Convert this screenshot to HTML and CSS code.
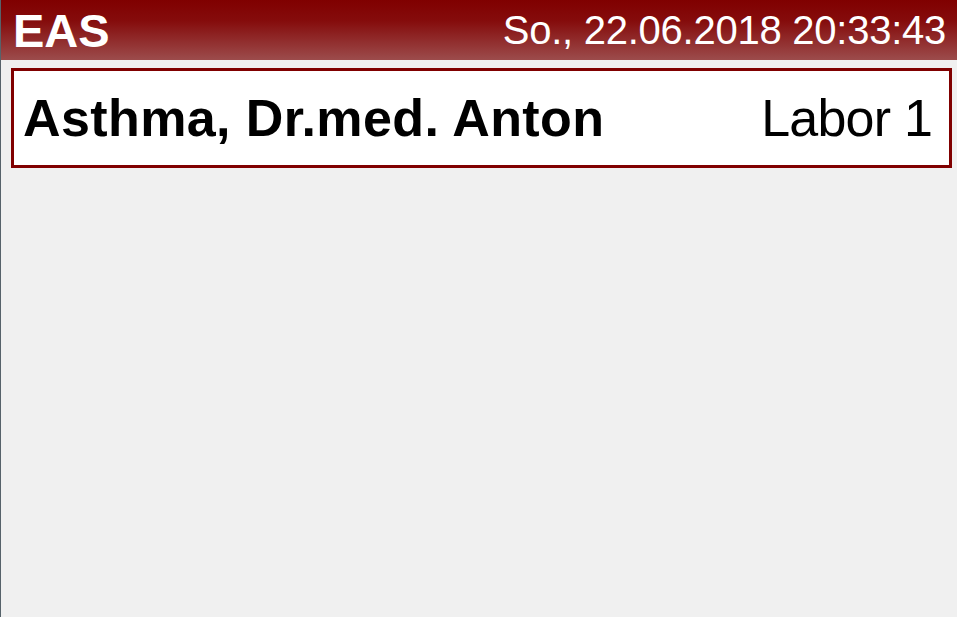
FILE: index.html
```html
<!DOCTYPE html>
<html lang="de">
<head>
<meta charset="utf-8">
<title>EAS</title>
<link rel="stylesheet" href="styles.css">
</head>
<body>
<div class="screen">
  <header class="topbar">
    <div class="brand">EAS</div>
    <div class="clock">So., 22.06.2018 20:33:43</div>
  </header>
  <main class="content">
    <div class="call-card">
      <div class="patient">Asthma, Dr.med. Anton</div>
      <div class="room">Labor 1</div>
    </div>
  </main>
</div>
</body>
</html>
```
FILE: styles.css
```css
html, body {
  margin: 0;
  padding: 0;
  height: 100%;
}
body {
  background: #f0f0f0;
  font-family: "Liberation Sans", Arial, sans-serif;
}
.screen {
  height: 617px;
  border-left: 1px solid #56626a;
  box-sizing: border-box;
  display: flex;
  flex-direction: column;
}
.topbar {
  height: 60px;
  background: linear-gradient(to bottom, #800000 0%, #850c0c 35%, #9c4c4c 100%);
  display: flex;
  align-items: center;
  justify-content: space-between;
  padding: 0 11px 0 12px;
  color: #fff;
}
.brand {
  font-weight: bold;
  font-size: 47px;
  line-height: 1;
}
.clock {
  font-size: 40px;
  line-height: 1;
  letter-spacing: -0.25px;
}
.content {
  padding: 8px 5px 0 10px;
}
.call-card {
  background: #fff;
  border: 3px solid #800000;
  height: 94px;
  display: flex;
  align-items: center;
  justify-content: space-between;
  padding: 0 17px 0 9px;
}
.patient {
  font-weight: bold;
  font-size: 52px;
  line-height: 1;
  letter-spacing: 0.4px;
}
.room {
  font-size: 52px;
  line-height: 1;
  letter-spacing: -0.8px;
}
```
